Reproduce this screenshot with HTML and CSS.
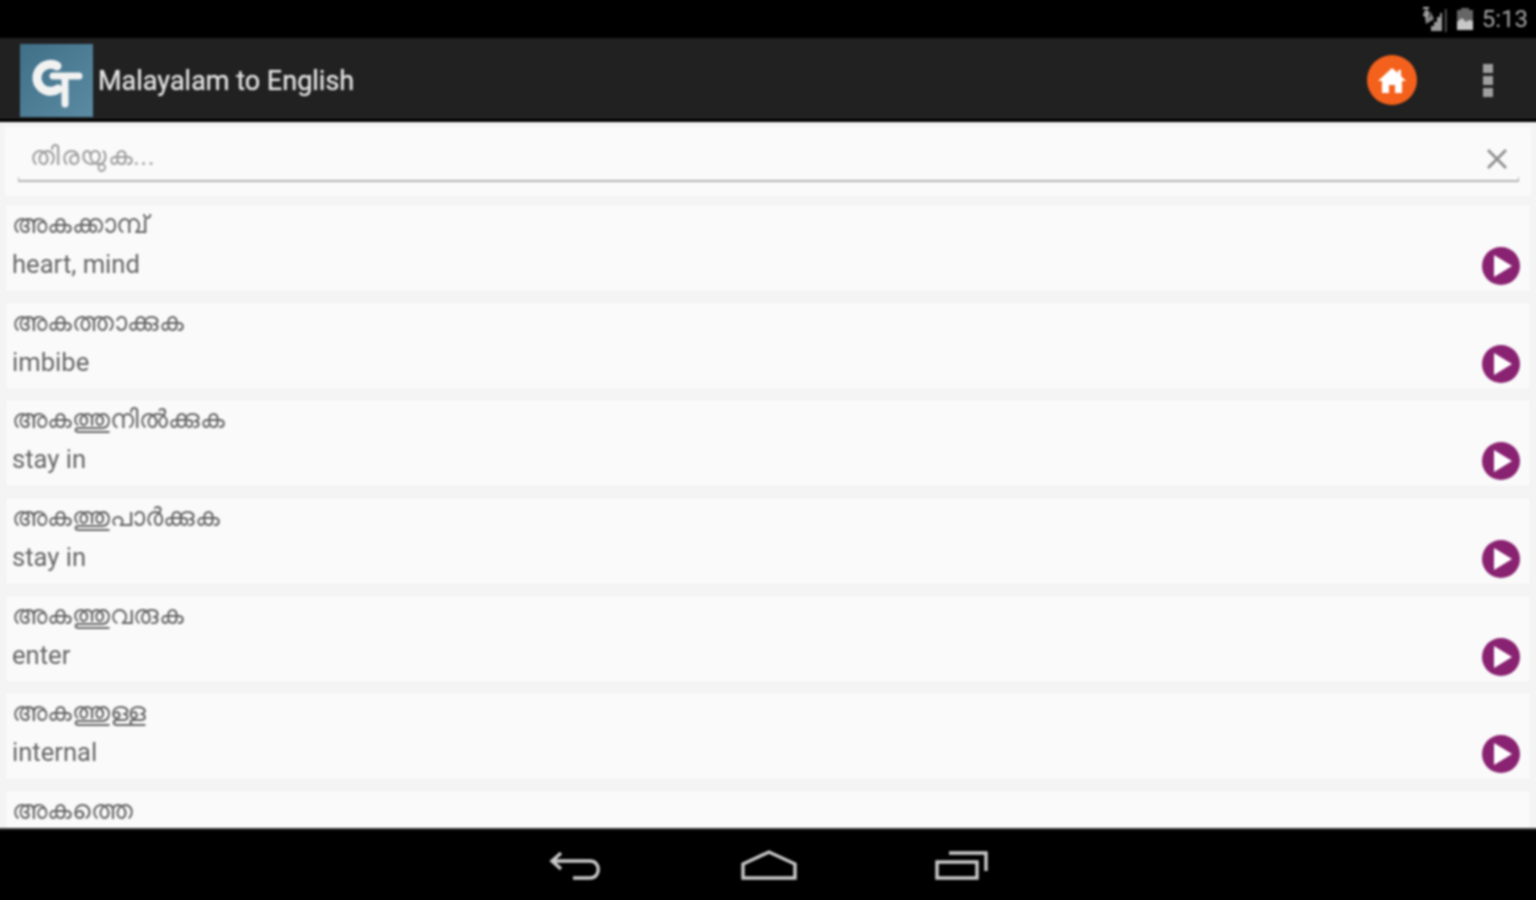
FILE: index.html
```html
<!DOCTYPE html>
<html lang="ml">
<head>
  <meta charset="UTF-8" />
  <title>Malayalam to English</title>
  <link rel="stylesheet" href="styles.css">
</head>
<body>
  <div class="screen">
    <div class="status-bar">
      <svg class="signal" width="26" height="28" viewBox="0 0 26 28">
        <path d="M7 26h2v-5h3v-4h3v-5h3v-4h2v18H7z" fill="#9a9a9a" />
        <path d="M2 6l6 7v-7l4 8-8 5z" fill="#8a8a8a" />
        <path d="M1 2h6v2H4v2h3v5H1V9h4V8H2V6h3V4H1z" fill="#b0b0b0" />
        <rect x="23" y="4" width="1.5" height="23" fill="#666" />
      </svg>
      <svg class="battery" width="18" height="24" viewBox="0 0 18 24">
        <path d="M5 1h8v2h4v20H1V3h4z" fill="#666" />
        <path d="M1 15l5-4 4 4 3-2 4 1v9H1z" fill="#c8c8c8" />
      </svg>
      <span class="clock">5:13</span>
    </div>

    <header class="action-bar">
      <div class="logo">
        <svg width="73" height="73" viewBox="0 0 73 73">
          <path d="M37 22a13.5 13.5 0 1 0 1 23" fill="none" stroke="#f2f2f2" stroke-width="9" stroke-linecap="round" />
          <path d="M33 32h26M45 32v28" stroke="#f2f2f2" stroke-width="7" stroke-linecap="round" fill="none" />
        </svg>
      </div>
      <h1 class="title">Malayalam to English</h1>
      <button class="home-btn" aria-label="Home">
        <svg width="34" height="34" viewBox="0 0 34 34">
          <path d="M17 5L3 18h4v12h7v-8h6v8h7V18h4l-5-5V7h-3v3z" fill="#fff" />
        </svg>
      </button>
      <div class="overflow"><i></i><i></i><i></i></div>
    </header>

    <main class="content">
      <div class="search-card">
        <div class="search-field">
          <span class="placeholder">തിരയുക...</span>
          <svg class="clear" width="24" height="24" viewBox="0 0 24 24">
            <path d="M3 3l18 18M21 3L3 21" stroke="#8f8f8f" stroke-width="2.8" fill="none" />
          </svg>
        </div>
        <div class="search-line"></div>
      </div>

      <ul class="word-list">
        <li class="word">
          <div class="word-text"><p class="ml">അകക്കാമ്പ്</p><p class="en">heart, mind</p></div>
          <svg class="play" viewBox="0 0 38 38"><circle cx="19" cy="19" r="19" /><path d="M12 8l18 11-18 11z" /></svg>
        </li>
        <li class="word">
          <div class="word-text"><p class="ml">അകത്താക്കുക</p><p class="en">imbibe</p></div>
          <svg class="play" viewBox="0 0 38 38"><circle cx="19" cy="19" r="19" /><path d="M12 8l18 11-18 11z" /></svg>
        </li>
        <li class="word">
          <div class="word-text"><p class="ml">അകത്തുനിൽക്കുക</p><p class="en">stay in</p></div>
          <svg class="play" viewBox="0 0 38 38"><circle cx="19" cy="19" r="19" /><path d="M12 8l18 11-18 11z" /></svg>
        </li>
        <li class="word">
          <div class="word-text"><p class="ml">അകത്തുപാർക്കുക</p><p class="en">stay in</p></div>
          <svg class="play" viewBox="0 0 38 38"><circle cx="19" cy="19" r="19" /><path d="M12 8l18 11-18 11z" /></svg>
        </li>
        <li class="word">
          <div class="word-text"><p class="ml">അകത്തുവരുക</p><p class="en">enter</p></div>
          <svg class="play" viewBox="0 0 38 38"><circle cx="19" cy="19" r="19" /><path d="M12 8l18 11-18 11z" /></svg>
        </li>
        <li class="word">
          <div class="word-text"><p class="ml">അകത്തുള്ള</p><p class="en">internal</p></div>
          <svg class="play" viewBox="0 0 38 38"><circle cx="19" cy="19" r="19" /><path d="M12 8l18 11-18 11z" /></svg>
        </li>
        <li class="word">
          <div class="word-text"><p class="ml">അകത്തെ</p></div>
        </li>
      </ul>
    </main>

    <nav class="nav-bar">
      <svg width="54" height="32" viewBox="0 0 54 32">
        <path d="M12 3L3 11l9 8M3 11h38c11 0 11 17 0 17H24" fill="none" stroke="#c8c8c8" stroke-width="3.4" />
      </svg>
      <svg width="56" height="30" viewBox="0 0 56 30">
        <path d="M2 28V14L28 2l26 12v14z" fill="none" stroke="#c8c8c8" stroke-width="3.4" />
      </svg>
      <svg width="54" height="30" viewBox="0 0 54 30">
        <path d="M2 12h40v16H2z" fill="none" stroke="#c8c8c8" stroke-width="3.4" />
        <path d="M14 3h37v18" fill="none" stroke="#c8c8c8" stroke-width="3.4" />
      </svg>
    </nav>
  </div>
</body>
</html>
```

FILE: styles.css
```css
* {
  margin: 0;
  padding: 0;
  box-sizing: border-box;
}

html,
body {
  height: 100%;
  overflow: hidden;
}

body {
  font-family: Roboto, "Liberation Sans", sans-serif;
  background: #000;
}

/* the source shot is a soft upscale, so everything is slightly blurred.
   3px of bleed each side keeps the blur from darkening the window edge */
.screen {
  display: flex;
  flex-direction: column;
  width: 1542px;
  height: 900px;
  margin-left: -3px;
  filter: blur(0.8px);
}

/* top status strip */
.status-bar {
  flex: 0 0 38px;
  background: #000;
  display: flex;
  align-items: center;
  justify-content: flex-end;
  gap: 8px;
  padding-right: 11px;
}

.clock {
  color: #a4a4a4;
  font-size: 24px;
}

/* action bar */
.action-bar {
  flex: 0 0 84px;
  background: #212121;
  border-bottom: 3px solid #000;
  display: flex;
  align-items: center;
  padding: 3px 46px 0 23px;
}

.logo {
  width: 73px;
  height: 73px;
  background: linear-gradient(135deg, #3f7088, #5a8ba3);
}

.title {
  flex: 1;
  margin: 2px 0 0 5px;
  color: #e0e0e0;
  font-size: 27px;
  font-weight: 400;
  text-shadow: 0 0 1px #e0e0e0;
}

.home-btn {
  width: 50px;
  height: 50px;
  border: none;
  border-radius: 50%;
  background: #f4611c;
  display: flex;
  align-items: center;
  justify-content: center;
  margin-right: 66px;
}

.overflow {
  display: flex;
  flex-direction: column;
  gap: 3px;
}

.overflow i {
  display: block;
  width: 10px;
  height: 9px;
  background: #a0a0a0;
}

/* list area */
.content {
  flex: 1;
  overflow: hidden;
  background: #f4f4f4;
  padding: 5px 8px 0;
}

.search-card {
  background: #fafafa;
  height: 69px;
  margin-bottom: 8px;
  padding: 0 12px 0 13px;
}

.search-field {
  height: 50px;
  display: flex;
  align-items: center;
  justify-content: space-between;
  padding: 8px 10px 0 12px;
}

.clear {
  margin-top: 6px;
}

.search-line {
  height: 5px;
  border: 1px solid #b4b4b4;
  border-top: none;
  border-bottom-width: 2px;
}

.placeholder {
  color: #9d9d9d;
  font-size: 26px;
  letter-spacing: 0.5px;
}

.word-list {
  list-style: none;
}

.word {
  height: 88px;
  margin-bottom: 9.7px;
  background: #fafafa;
  border: 1px solid #f0f0f0;
  display: flex;
  justify-content: space-between;
  padding: 1px 10px 0 6px;
}

.ml {
  color: #666;
  font-size: 26px;
  line-height: 36px;
}

.en {
  color: #666;
  font-size: 25.6px;
  line-height: 36px;
  margin-top: 4px;
}

.play {
  width: 38px;
  height: 38px;
  margin-top: 41px;
  fill: #fff;
}

.play circle {
  fill: #8a2272;
}

/* bottom nav */
.nav-bar {
  flex: 0 0 72px;
  background: #000;
  border-top: 2px solid #333;
  display: flex;
  align-items: center;
  justify-content: center;
  gap: 138px;
}

.nav-bar svg:first-child {
  margin-left: 2px;
  margin-top: 2px;
}
```
